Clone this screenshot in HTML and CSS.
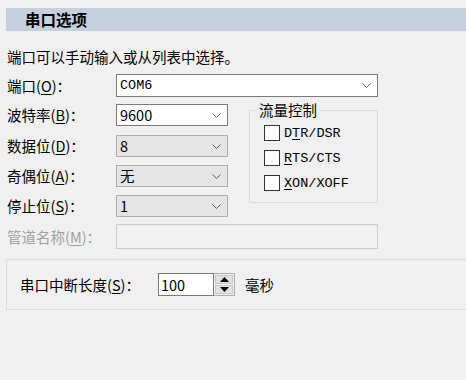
FILE: index.html
```html
<!DOCTYPE html>
<html lang="zh-CN">
<head>
    <meta charset="UTF-8">
    <title>串口选项</title>
    <link rel="stylesheet" href="styles.css">
</head>
<body>
    <div class="page">
        <div class="title">串口选项</div>
        <p class="intro">端口可以手动输入或从列表中选择。</p>
        <div class="row port-row">
            <label class="lbl">端口(<u>O</u>)：</label>
            <div class="combo edit wide">
                <span class="val mono">COM6</span>
                <svg class="chev" width="9" height="5" viewBox="0 0 9 5"><path d="M0.5 0.5 L4.5 4.5 L8.5 0.5" fill="none" stroke="#606060"/></svg>
            </div>
        </div>
        <div class="opts">
            <div class="col">
                <div class="row">
                    <label class="lbl">波特率(<u>B</u>)：</label>
                    <div class="combo edit">
                        <span class="val">9600</span>
                        <svg class="chev" width="9" height="5" viewBox="0 0 9 5"><path d="M0.5 0.5 L4.5 4.5 L8.5 0.5" fill="none" stroke="#606060"/></svg>
                    </div>
                </div>
                <div class="row">
                    <label class="lbl">数据位(<u>D</u>)：</label>
                    <div class="combo list">
                        <span class="val">8</span>
                        <svg class="chev" width="9" height="5" viewBox="0 0 9 5"><path d="M0.5 0.5 L4.5 4.5 L8.5 0.5" fill="none" stroke="#606060"/></svg>
                    </div>
                </div>
                <div class="row">
                    <label class="lbl">奇偶位(<u>A</u>)：</label>
                    <div class="combo list">
                        <span class="val">无</span>
                        <svg class="chev" width="9" height="5" viewBox="0 0 9 5"><path d="M0.5 0.5 L4.5 4.5 L8.5 0.5" fill="none" stroke="#606060"/></svg>
                    </div>
                </div>
                <div class="row">
                    <label class="lbl">停止位(<u>S</u>)：</label>
                    <div class="combo list">
                        <span class="val">1</span>
                        <svg class="chev" width="9" height="5" viewBox="0 0 9 5"><path d="M0.5 0.5 L4.5 4.5 L8.5 0.5" fill="none" stroke="#606060"/></svg>
                    </div>
                </div>
            </div>
            <div class="flow">
                <span class="flow-title">流量控制</span>
                <div class="chk"><span class="box"></span><span class="mono">D<u>T</u>R/DSR</span></div>
                <div class="chk"><span class="box"></span><span class="mono"><u>R</u>TS/CTS</span></div>
                <div class="chk"><span class="box"></span><span class="mono"><u>X</u>ON/XOFF</span></div>
            </div>
        </div>
        <div class="row pipe-row">
            <label class="lbl dis">管道名称(<u>M</u>)：</label>
            <div class="pipe"></div>
        </div>
        <div class="brk">
            <label class="brk-lbl">串口中断长度(<u>S</u>)：</label>
            <div class="spin">
                <span class="spin-val">100</span>
                <div class="spin-btns">
                    <span class="sb"><svg width="9" height="5" viewBox="0 0 9 5"><path d="M4.5 0 L9 5 L0 5 Z" fill="#000"/></svg></span>
                    <span class="sb"><svg width="9" height="5" viewBox="0 0 9 5"><path d="M0 0 L9 0 L4.5 5 Z" fill="#000"/></svg></span>
                </div>
            </div>
            <span class="unit">毫秒</span>
        </div>
    </div>
</body>
</html>
```

FILE: styles.css
```css
*{padding: 0;margin: 0;box-sizing: border-box;}
html,body{height: 100%;}
body{
    background: #f0f0f0;
    font-family: "Noto Sans CJK SC", "Noto Sans", sans-serif;
    font-size: 14.5px;
    color: #000;
    overflow: hidden;
}
u{text-decoration: underline;text-underline-offset: 2px;}
.mono{font-family: "Liberation Mono", "DejaVu Sans Mono", monospace;font-size: 13.5px;}

.page{padding-left: 6px;}

.title{
    margin-top: 8px;
    height: 23px;
    line-height: 23px;
    padding-left: 19px;
    background: #c4d0dd;
    font-weight: bold;
    font-size: 15.5px;
}
.intro{
    margin-top: 16px;
    height: 20px;
    line-height: 20px;
    padding-left: 1px;
}

.row{
    display: flex;
    align-items: center;
}
.lbl{
    width: 110px;
    padding-left: 1px;
    line-height: 20px;
}
.lbl.dis{color: #a0a0a0;}

.port-row{margin-top: 7px;}

.combo{
    width: 112px;
    height: 22px;
    display: flex;
    align-items: center;
    justify-content: space-between;
    padding: 0 6px 0 3px;
}
.combo.wide{width: 262px;height: 23px;}
.combo.edit{background: #fff;border: 1px solid #7a7a7a;}
.combo.list{background: #e5e5e5;border: 1px solid #adadad;}
.val{line-height: 18px;}

.opts{
    display: flex;
    align-items: flex-start;
    margin-top: 7px;
}
.col{
    flex: none;
    display: flex;
    flex-direction: column;
    gap: 8px;
}
.col .row:nth-child(2){margin-top: 1px;}

.flow{
    flex: none;
    position: relative;
    margin-left: 21px;
    margin-top: 6px;
    width: 129px;
    height: 93px;
    border: 1px solid #dcdcdc;
    padding: 14px 0 0 14px;
    display: flex;
    flex-direction: column;
    gap: 9px;
}
.flow-title{
    position: absolute;
    left: 7px;
    top: -11px;
    padding: 0 2px;
    line-height: 20px;
    background: #f0f0f0;
}
.chk{
    display: flex;
    align-items: center;
    gap: 4px;
    height: 16px;
}
.box{
    width: 16px;
    height: 16px;
    background: #fff;
    border: 1px solid #333;
}

.pipe-row{margin-top: 7px;}
.pipe{
    width: 262px;
    height: 25px;
    border: 1px solid #cccccc;
    background: #f0f0f0;
}

.brk{
    margin-top: 10px;
    margin-right: -10px;
    height: 51px;
    border: 1px solid #dcdcdc;
    display: flex;
    align-items: center;
    padding-left: 13px;
}
.brk-lbl{width: 138px;}
.spin{
    display: flex;
    height: 23px;
}
.spin-val{
    width: 56px;
    height: 23px;
    background: #fff;
    border: 1px solid #7a7a7a;
    padding-left: 2px;
    line-height: 21px;
}
.spin-btns{
    width: 21px;
    border: 1px solid #adadad;
    border-left: none;
    display: flex;
    flex-direction: column;
    padding: 1px;
    gap: 1px;
}
.sb{
    flex: 1;
    background: #e1e1e1;
    border: 1px solid #c8c8c8;
    display: flex;
    align-items: center;
    justify-content: center;
}
.unit{margin-left: 10px;}
```
